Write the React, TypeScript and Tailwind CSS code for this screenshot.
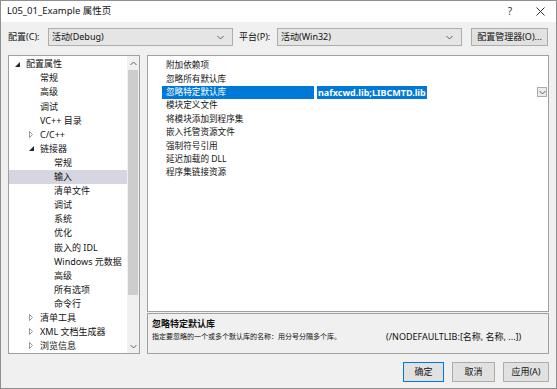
import React from "react";

const FONT = { fontFamily: '"Noto Sans", "Noto Sans CJK SC", sans-serif' };

type TreeItem = { level: number; text: string; exp?: "open" | "closed"; sel?: boolean };

const tree: TreeItem[] = [
  { level: 0, text: "配置属性", exp: "open" },
  { level: 1, text: "常规" },
  { level: 1, text: "高级" },
  { level: 1, text: "调试" },
  { level: 1, text: "VC++ 目录" },
  { level: 1, text: "C/C++", exp: "closed" },
  { level: 1, text: "链接器", exp: "open" },
  { level: 2, text: "常规" },
  { level: 2, text: "输入", sel: true },
  { level: 2, text: "清单文件" },
  { level: 2, text: "调试" },
  { level: 2, text: "系统" },
  { level: 2, text: "优化" },
  { level: 2, text: "嵌入的 IDL" },
  { level: 2, text: "Windows 元数据" },
  { level: 2, text: "高级" },
  { level: 2, text: "所有选项" },
  { level: 2, text: "命令行" },
  { level: 1, text: "清单工具", exp: "closed" },
  { level: 1, text: "XML 文档生成器", exp: "closed" },
  { level: 1, text: "浏览信息", exp: "closed" },
];

const props = [
  "附加依赖项",
  "忽略所有默认库",
  "忽略特定默认库",
  "模块定义文件",
  "将模块添加到程序集",
  "嵌入托管资源文件",
  "强制符号引用",
  "延迟加载的 DLL",
  "程序集链接资源",
];

function Chevron({ up = false }: { up?: boolean }) {
  return (
    <svg width="7" height="5" viewBox="0 0 7 5">
      <path
        d={up ? "M0.5 4 L3.5 1 L6.5 4" : "M0.5 1 L3.5 4 L6.5 1"}
        fill="none"
        stroke="#606060"
        strokeWidth="1"
      />
    </svg>
  );
}

function Expander({ exp }: { exp?: "open" | "closed" }) {
  if (exp === "open")
    return (
      <svg width="5" height="5" viewBox="0 0 5 5">
        <path d="M5 0 L5 5 L0 5 Z" fill="#262626" />
      </svg>
    );
  if (exp === "closed")
    return (
      <svg width="4" height="7" viewBox="0 0 4 7">
        <path d="M0.5 0.5 L3.5 3.5 L0.5 6.5 Z" fill="none" stroke="#8a8a8a" strokeWidth="0.9" />
      </svg>
    );
  return null;
}

function Combo({ text, w }: { text: string; w: string }) {
  return (
    <div className={`${w} h-[18px] bg-[#e5e5e5] border border-[#adadad] flex items-center pl-[3px] pr-[8px]`}>
      <span className="flex-1 text-[9px] text-[#111]">{text}</span>
      <Chevron />
    </div>
  );
}

export default function App() {
  return (
    <div
      style={FONT}
      className="w-[557px] h-[389px] border border-[#8f8f8f] bg-[#f0f0f0] flex flex-col text-[#111] overflow-hidden"
    >
      {/* title bar */}
      <div className="h-[21px] bg-white flex items-center pl-[6px] shrink-0">
        <span className="text-[9.5px] flex-1">L05_01_Example 属性页</span>
        <span className="text-[10px] text-[#333] w-[10px] text-center">?</span>
        <span className="ml-[21px] mr-[11px] flex items-center">
          <svg width="9" height="9" viewBox="0 0 9 9">
            <path d="M0.5 0.5 L8.5 8.5 M8.5 0.5 L0.5 8.5" stroke="#333" strokeWidth="1" />
          </svg>
        </span>
      </div>

      {/* config row */}
      <div className="mt-[6px] h-[18px] flex items-center pl-[7px] shrink-0">
        <span className="w-[40px] text-[9px]">配置(C):</span>
        <Combo text="活动(Debug)" w="w-[185px]" />
        <span className="ml-[6px] w-[38px] text-[9px]">平台(P):</span>
        <Combo text="活动(Win32)" w="w-[185px]" />
        <div className="ml-[9px] w-[77px] h-[18px] bg-[#e1e1e1] border border-[#adadad] flex items-center justify-center text-[9px]">
          配置管理器(O)...
        </div>
      </div>

      {/* main area */}
      <div className="mt-[9px] h-[299px] flex pl-[7px] shrink-0">
        {/* tree */}
        <div className="w-[132px] h-full border border-[#a0a0a0] bg-white flex">
          <div className="w-[118px] pt-[1px] flex flex-col">
            {tree.map((t, i) => (
              <div
                key={i}
                className={`h-[14.15px] flex items-center text-[9px] whitespace-nowrap ${
                  t.sel ? "bg-[#d6d6e3]" : ""
                }`}
              >
                <span
                  className="flex items-center justify-center w-[8px]"
                  style={{ marginLeft: 4 + t.level * 14 }}
                >
                  <Expander exp={t.exp} />
                </span>
                <span className="ml-[5px]">{t.text}</span>
              </div>
            ))}
          </div>
          <div className="w-[12px] h-full bg-[#f0f0f0] flex flex-col items-center">
            <div className="h-[14px] flex items-center justify-center">
              <Chevron up />
            </div>
            <div className="w-[10px] h-[225px] bg-[#cdcdcd]" />
            <div className="flex-1" />
            <div className="h-[14px] flex items-center justify-center">
              <Chevron />
            </div>
          </div>
        </div>

        {/* right column */}
        <div className="ml-[7px] w-[402px] h-full flex flex-col">
          <div className="h-[257px] border border-[#a0a0a0] bg-white pt-[3px] flex flex-col">
            {props.map((p, i) => {
              const sel = i === 2;
              return (
                <div key={i} className="h-[13.4px] flex items-center text-[8.6px] whitespace-nowrap">
                  <div className="w-[14px]" />
                  <div
                    className={`w-[152px] h-full flex items-center pl-[4px] ${
                      sel ? "bg-[#0078d7] text-white" : ""
                    }`}
                  >
                    {p}
                  </div>
                  <div className="w-[3px]" />
                  {sel && (
                    <div className="flex-1 h-full flex items-center pr-[1px]">
                      <span className="bg-[#0078d7] text-white font-bold text-[9px] h-full flex items-center pl-[1px] pr-[1px]">
                        nafxcwd.lib;LIBCMTD.lib
                      </span>
                      <div className="flex-1" />
                      <div className="w-[10px] h-[10px] border border-[#adadad] bg-[#ececec] flex items-center justify-center">
                        <Chevron />
                      </div>
                    </div>
                  )}
                </div>
              );
            })}
          </div>
          <div className="mt-[1px] h-[41px] border border-[#a0a0a0] bg-[#f0f0f0] pl-[4px] pt-[3px] flex flex-col">
            <div className="text-[9px] font-bold h-[13px] leading-[13px]">忽略特定默认库</div>
            <div className="h-[13px] leading-[13px] flex items-center whitespace-nowrap">
              <span className="w-[234px] text-[7px]">指定要忽略的一个或多个默认库的名称：用分号分隔多个库。</span>
              <span className="text-[9px]">(/NODEFAULTLIB:[名称, 名称, ...])</span>
            </div>
          </div>
        </div>
      </div>

      {/* buttons */}
      <div className="mt-[8px] h-[20px] flex justify-end pr-[7px] gap-[8px] shrink-0">
        <div className="w-[41px] h-full bg-[#e1e1e1] border border-[#0078d7] flex items-center justify-center text-[9px]">
          确定
        </div>
        <div className="w-[43px] h-full bg-[#e1e1e1] border border-[#adadad] flex items-center justify-center text-[9px]">
          取消
        </div>
        <div className="w-[46px] h-full bg-[#e1e1e1] border border-[#adadad] flex items-center justify-center text-[9px]">
          应用(A)
        </div>
      </div>
    </div>
  );
}
